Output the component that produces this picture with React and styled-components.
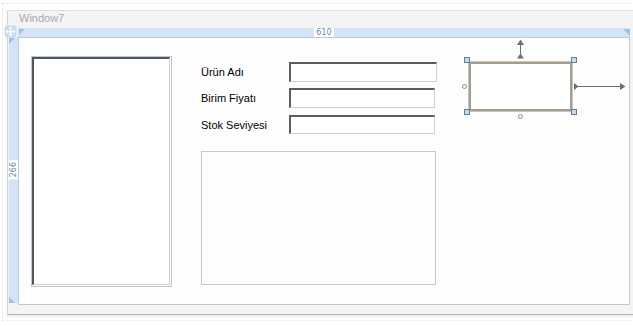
import React from "react";
import styled, { createGlobalStyle } from "styled-components";

const Global = createGlobalStyle`
  html, body { margin: 0; padding: 0; background: #ffffff; overflow: hidden; }
  body { font-family: "Liberation Sans", Arial, sans-serif; }
`;

const Page = styled.div`
  width: 640px;
  height: 318px;
  margin: 3px 0 0 2px;
  border-top: 1px dotted #e2e2e2;
  border-left: 1px dotted #e2e2e2;
  border-bottom: 1px dotted #e2e2e2;
  padding: 6px 0 0 4px;
  box-sizing: border-box;
`;

const Window = styled.div`
  position: relative;
  width: 640px;
  background: #f4f4f4;
  border-top: 1px solid #dedede;
  border-left: 1px solid #d6d6d6;
  border-bottom: 1px solid #b2b2b2;
  box-shadow: 0 2px 3px rgba(0, 0, 0, 0.08);
  display: flex;
  flex-direction: column;
`;

const Title = styled.div`
  height: 17px;
  padding-left: 11px;
  font-size: 11px;
  line-height: 15px;
  color: #a8a8b4;
`;

const MoveIcon = styled.svg`
  position: absolute;
  left: -4px;
  top: 14px;
`;

const Body = styled.div`
  display: grid;
  grid-template-columns: 9px 612px;
  grid-template-rows: 9px 268px;
  padding: 0 0 9px 1px;
`;

const Corner = styled.div``;

const TopRuler = styled.div`
  position: relative;
  background: #d4e3f5;
  display: flex;
  justify-content: center;
  align-items: stretch;
`;

const SideRuler = styled.div`
  position: relative;
  background: #d4e3f5;
  height: 266px;
  display: flex;
  align-items: center;
  justify-content: center;
`;

const RulerLabel = styled.span`
  background: #ffffff;
  color: #6f86a8;
  font-family: "DejaVu Sans", sans-serif;
  font-size: 8px;
  line-height: 9px;
  padding: 0 2px;
`;

const SideLabel = styled(RulerLabel)`
  writing-mode: vertical-rl;
  transform: rotate(180deg);
  padding: 2px 0;
  width: 9px;
  display: flex;
  align-items: center;
  justify-content: center;
`;

const Tri = styled.span`
  position: absolute;
  width: 0;
  height: 0;
  ${(p) => p.$pos};
`;

const Canvas = styled.div`
  background: #fdfdfd;
  border: 1px solid #b9cadb;
  box-sizing: border-box;
  height: 268px;
  display: flex;
  align-items: flex-start;
  padding: 18px 0 0 12px;
`;

const ListBox = styled.div`
  width: 141px;
  height: 231px;
  box-sizing: border-box;
  border: 1px solid #b8c8d8;
  display: flex;
`;

const ListInner = styled.div`
  flex: 1;
  margin: 0 1px 1px 0;
  background: #ffffff;
  border-top: 2px solid #4e565e;
  border-left: 2px solid #4e565e;
  border-right: 1px solid #d6d2c8;
  border-bottom: 1px solid #d6d2c8;
`;

const MiddleColumn = styled.div`
  margin-left: 29px;
  width: 236px;
  display: flex;
  flex-direction: column;
`;

const FieldRow = styled.div`
  display: grid;
  grid-template-columns: 88px auto;
  align-items: center;
  margin-top: ${(p) => p.$top}px;
`;

const Label = styled.span`
  font-size: 11px;
  color: #000000;
`;

const TextBox = styled.div`
  width: ${(p) => p.$w}px;
  height: ${(p) => p.$h}px;
  box-sizing: border-box;
  background: #ffffff;
  border-top: 2px solid #5c5c5c;
  border-left: 2px solid #5c5c5c;
  border-right: 1px solid #d4d0c8;
  border-bottom: 1px solid #d4d0c8;
`;

const Memo = styled.div`
  margin-top: 17px;
  width: 235px;
  height: 134px;
  box-sizing: border-box;
  border: 1px solid #b9cadb;
  background: #fdfdfd;
`;

const Selection = styled.div`
  position: relative;
  margin: 6px 0 0 32px;
`;

const SelectedPanel = styled.div`
  width: 103px;
  height: 49px;
  box-sizing: border-box;
  border: 2px solid #aa9b8b;
  box-shadow: 0 0 0 1px #bcc7d0;
  background: #ffffff;
`;

const Adorners = styled.svg`
  position: absolute;
  left: -10px;
  top: -25px;
  overflow: visible;
`;

function Handle({ x, y }) {
  return <rect x={x} y={y} width="5" height="5" fill="#cadae7" stroke="#5f7f9c" strokeWidth="1" />;
}

export default function App() {
  return (
    <>
      <Global />
      <Page>
        <Window>
          <MoveIcon width="13" height="13" viewBox="0 0 13 13">
            <rect x="0.5" y="0.5" width="12" height="12" rx="3" fill="#c7dbf1" />
            <path d="M6.5 2.5v8M2.5 6.5h8" stroke="#ffffff" strokeWidth="1.4" />
            <path d="M6.5 1.5l-2 2h4zM6.5 11.5l-2-2h4zM1.5 6.5l2-2v4zM11.5 6.5l-2-2v4z" fill="#ffffff" />
          </MoveIcon>
          <Title>Window7</Title>
          <Body>
            <Corner />
            <TopRuler>
              <Tri $pos="left: 1px; top: 1px; border-top: 6px solid #9fc0ea; border-right: 6px solid transparent;" />
              <RulerLabel>610</RulerLabel>
              <Tri $pos="right: 0; top: 1px; border-top: 7px solid #9fc0ea; border-left: 7px solid transparent;" />
            </TopRuler>
            <SideRuler>
              <Tri $pos="left: 0; top: 1px; border-top: 6px solid #9fc0ea; border-right: 6px solid transparent;" />
              <SideLabel>266</SideLabel>
              <Tri $pos="left: 0; bottom: 0; border-bottom: 6px solid #9fc0ea; border-right: 6px solid transparent;" />
            </SideRuler>
            <Canvas>
              <ListBox>
                <ListInner />
              </ListBox>
              <MiddleColumn>
                <FieldRow $top={6}>
                  <Label>Ürün Adı</Label>
                  <TextBox $w={148} $h={20} />
                </FieldRow>
                <FieldRow $top={6}>
                  <Label>Birim Fiyatı</Label>
                  <TextBox $w={146} $h={20} />
                </FieldRow>
                <FieldRow $top={7}>
                  <Label>Stok Seviyesi</Label>
                  <TextBox $w={146} $h={19} />
                </FieldRow>
                <Memo />
              </MiddleColumn>
              <Selection>
                <SelectedPanel />
                <Adorners width="170" height="90" viewBox="0 0 170 90">
                  <g fill="#6e6e6e" stroke="none">
                    <polygon points="61.5,2.5 58,8 65,8" />
                    <polygon points="61.5,16.5 58,21.5 65,21.5" />
                    <polygon points="115,46 115,53 119.5,49.5" />
                    <polygon points="161,46 161,53 166.5,49.5" />
                  </g>
                  <g stroke="#6e6e6e" strokeWidth="1">
                    <line x1="61.5" y1="8" x2="61.5" y2="17" />
                    <line x1="119" y1="49.5" x2="162" y2="49.5" />
                  </g>
                  <circle cx="5.5" cy="49.5" r="2" fill="#ffffff" stroke="#8a8a8a" />
                  <circle cx="61.5" cy="79.5" r="2" fill="#ffffff" stroke="#8a8a8a" />
                  <Handle x={5.5} y={20.5} />
                  <Handle x={112.5} y={20.5} />
                  <Handle x={5.5} y={72.5} />
                  <Handle x={112.5} y={72.5} />
                </Adorners>
              </Selection>
            </Canvas>
          </Body>
        </Window>
      </Page>
    </>
  );
}
